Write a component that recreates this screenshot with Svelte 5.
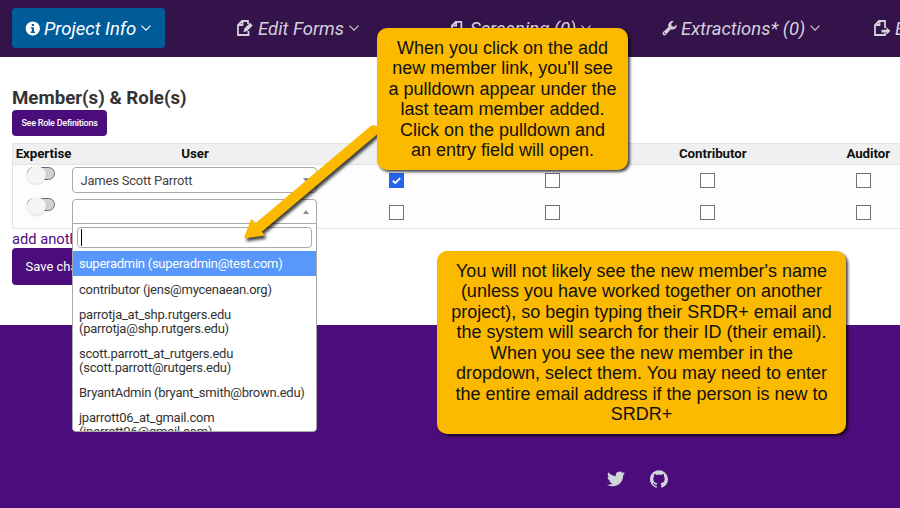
<script>
  const roles = ['Leader', 'Consolidator', 'Contributor', 'Auditor'];
  const rows = [[true, false, false, false], [false, false, false, false]];
  const options = [
    'superadmin (superadmin@test.com)',
    'contributor (jens@mycenaean.org)',
    'parrotja_at_shp.rutgers.edu (parrotja@shp.rutgers.edu)',
    'scott.parrott_at_rutgers.edu (scott.parrott@rutgers.edu)',
    'BryantAdmin (bryant_smith@brown.edu)',
    'jparrott06_at_gmail.com (jparrott06@gmail.com)'
  ];
  const nav = [
    { icon: 'info', label: 'Project Info' },
    { icon: 'edit', label: 'Edit Forms' },
    { icon: 'file', label: 'Screening (0)' },
    { icon: 'wrench', label: 'Extractions* (0)' },
    { icon: 'export', label: 'Export' }
  ];
</script>

<div class="page">
  <nav>
    {#each nav as item, i}
      <div class="cell">
        <div class="item" class:active={i === 0}>
          <svg class="icon" class:wide={i === 1 || i === 4} viewBox="0 0 16 16">
            {#if item.icon === 'info'}
              <circle cx="8.300" cy="8" r="7.600" fill="currentColor" />
              <path d="M7.200 3.200h2.300v2H7.200zM6.200 6.600h3.300v4.600h1.100v1.500H6.200v-1.500h1.100V8.100H6.200z" fill="#005b99" />
            {:else if item.icon === 'edit'}
              <path d="M11 4V1H5L1 5v10h10.5v-4M5.5 1v4H1" fill="none" stroke="currentColor" stroke-width="1.8" />
              <path d="M6.5 12l.8-3.500L13 2.800l2.700 2.600L10 11.200z" fill="currentColor" />
            {:else if item.icon === 'wrench'}
              <path d="M15.7 3.8a4.6 4.6 0 0 1-6.2 5L3.9 15A2.2 2.2 0 0 1 .8 12L7 6.4A4.6 4.6 0 0 1 12.5.3L9.8 3l.5 2.6 2.7.5zM3 12.3a.8.8 0 1 0 0 1.6.8.8 0 0 0 0-1.6z" fill="currentColor" fill-rule="evenodd" />
            {:else}
              <path d="M11 8V1H5L1 5v10h10v-2M5.5 1v4H1" fill="none" stroke="currentColor" stroke-width="1.8" />
              {#if item.icon === 'export'}
                <path d="M7.5 9.7h5V7.2l4 3.8-4 3.8v-2.4h-5z" fill="currentColor" />
              {/if}
            {/if}
          </svg>
          <span>{item.label}</span>
          <svg class="chev" viewBox="0 0 10 6"><path d="M.5.7 5 5.2 9.5.7" fill="none" stroke="currentColor" stroke-width="1.1" /></svg>
        </div>
      </div>
    {/each}
  </nav>

  <main>
    <h1>Member(s) &amp; Role(s)</h1>
    <button class="defs">See Role Definitions</button>
    <div class="table">
      <div class="row head">
        <b>Expertise</b><b>User</b>
        {#each roles as r}<b>{r}</b>{/each}
      </div>
      {#each rows as row, i}
        <div class="row body">
          <div class="switch"><i></i></div>
          <div class="select" class:open={i === 1}>
            <span>{i === 0 ? 'James Scott Parrott' : ''}</span>
            <em></em>
            {#if i === 1}
              <div class="menu">
                <div class="search"><i></i></div>
                <ul>
                  {#each options as o, n}<li class:on={n === 0}>{o}</li>{/each}
                </ul>
              </div>
            {/if}
          </div>
          {#each row as on}
            <div class="box" class:on>
              {#if on}<svg viewBox="0 0 13 13"><path d="M2.8 6.8 5.3 9 10.2 4.2" fill="none" stroke="#fff" stroke-width="1.8" /></svg>{/if}
            </div>
          {/each}
        </div>
      {/each}
    </div>
    <a class="add">add another</a>
    <button class="save">Save changes</button>
  </main>

  <footer>
    <svg viewBox="0 0 24 24"><path fill="currentColor" d="M23.95 4.57a10 10 0 0 1-2.82.77 4.96 4.96 0 0 0 2.16-2.72c-.95.55-2 .95-3.13 1.18a4.92 4.92 0 0 0-8.38 4.48C7.69 8.1 4.07 6.13 1.64 3.16a4.82 4.82 0 0 0-.67 2.48c0 1.71.87 3.21 2.19 4.1a4.9 4.9 0 0 1-2.23-.62v.06a4.92 4.92 0 0 0 3.95 4.83 5 5 0 0 1-2.21.08 4.94 4.94 0 0 0 4.6 3.42A9.87 9.87 0 0 1 0 19.54a13.99 13.99 0 0 0 7.55 2.21c9.05 0 14-7.5 14-13.98 0-.21 0-.42-.02-.63a9.94 9.94 0 0 0 2.46-2.55z" /></svg>
    <svg viewBox="0 0 24 24"><path fill="currentColor" d="M12 .3a12 12 0 0 0-3.8 23.38c.6.12.83-.26.83-.57L9 21.07c-3.34.72-4.04-1.61-4.04-1.61-.55-1.39-1.34-1.76-1.34-1.76-1.08-.74.09-.73.09-.73 1.2.09 1.83 1.24 1.83 1.24 1.08 1.83 2.81 1.3 3.5 1 .1-.78.42-1.31.76-1.61-2.67-.3-5.47-1.33-5.47-5.93 0-1.31.47-2.38 1.24-3.22-.14-.3-.54-1.52.1-3.18 0 0 1-.32 3.3 1.23a11.5 11.5 0 0 1 6 0c2.28-1.55 3.29-1.23 3.29-1.23.64 1.66.24 2.88.12 3.18a4.65 4.65 0 0 1 1.23 3.22c0 4.61-2.8 5.63-5.48 5.92.42.36.81 1.1.81 2.22l-.01 3.29c0 .31.2.69.82.57A12 12 0 0 0 12 .3" /></svg>
  </footer>

  <svg class="arrow" viewBox="0 0 900 508">
    <g fill="#fbba00" stroke="#fbba00">
      <path d="M373.500 130.500 258 228" stroke-width="10.500" stroke-linecap="round" />
      <path d="M245 237.500 251.500 220 263.500 235z" stroke-width="1.500" stroke-linejoin="round" />
    </g>
  </svg>
  <div class="note one">
    When you click on the add<br />new member link, you'll see<br />a pulldown appear under the<br />last team member added.<br />Click on the pulldown and<br />an entry field will open.
  </div>
  <div class="note two">
    You will not likely see the new member's name<br />(unless you have worked together on another<br />project), so begin typing their SRDR+ email and<br />the system will search for their ID (their email).<br />When you see the new member in the<br />dropdown, select them. You may need to enter<br />the entire email address if the person is new to<br />SRDR+
  </div>
</div>

<style>
  .page { position: relative; width: 900px; height: 508px; overflow: hidden; display: flex; flex-direction: column; background: #fff; font-family: Roboto, sans-serif; color: #333; }
  .page * { box-sizing: border-box; }
  nav { height: 57px; flex: none; background: #34124a; display: grid; grid-template-columns: 211px 214px 211px 212px 212px; padding: 8px 0 0 12px; color: #d4d0dc; }
  .cell { display: flex; }
  .item { height: 40px; padding: 0 14px; display: flex; align-items: center; border-radius: 4px; font-size: 18.500px; font-style: italic; white-space: nowrap; }
  .item span { padding-top: 2px; }
  .active { background: #005b99; color: #fff; width: 153px; padding: 0 13px; }
  .icon { width: 15px; height: 15px; margin-right: 4px; overflow: visible; }
  .wide { width: 16px; height: 16px; margin-right: 5px; }
  .chev { width: 10px; height: 6px; margin-left: 5px; }
  main { height: 268px; flex: none; padding: 31px 0 0 12px; display: flex; flex-direction: column; align-items: flex-start; }
  h1 { margin: 0; font-size: 18.700px; line-height: 21px; height: 22px; font-weight: 700; }
  button { border: 0; background: #4c0d7c; color: #fff; font-family: inherit; border-radius: 4px; padding: 0; white-space: nowrap; }
  .defs { width: 95px; height: 26px; font-size: 9px; font-weight: 500; letter-spacing: -.24px; }
  .table { margin-top: 7px; width: 932px; height: 86px; flex: none; border: 1px solid #e3e3e3; background: #fdfdfd; }
  .row { display: grid; grid-template-columns: 59px 247px repeat(4, 155.5px); }
  .head { height: 21px; background: #f0f0f0; border-bottom: 1px solid #e3e3e3; text-align: center; color: #111; font-size: 13.300px; line-height: 20px; letter-spacing: -.05px; }
  .head b:first-child { padding-left: 2px; white-space: nowrap; }
  .head b:nth-child(2) { padding-right: 1px; }
  .head b:nth-child(n+3) { padding-left: 10px; }
  .body { height: 32px; padding-top: 2px; }
  .switch { width: 28px; height: 13px; margin: 0 0 0 14px; border: 1px solid #666b78; border-radius: 7px; background: #d2d2d2; position: relative; }
  .switch i { position: absolute; left: -1px; top: -2px; width: 19px; height: 18px; border-radius: 50%; background: #f5f5f5; box-shadow: 0 1px 2px #0002; }
  .body + .body .switch { margin-top: -1px; }
  .select { position: relative; width: 245px; height: 26px; border: 1px solid #aaa; border-radius: 4px; background: #fff; display: flex; align-items: center; justify-content: space-between; padding: 0 7px 0 7.500px; font-size: 13px; letter-spacing: -.22px; color: #444; }
  .select em { border: 3px solid transparent; border-top: 4px solid #888; border-bottom: 0; }
  .open { border-radius: 4px 4px 0 0; }
  .open em { border-top: 0; border-bottom: 4px solid #888; }
  .menu { position: absolute; z-index: 2; top: 23px; left: -1px; width: 245px; height: 209px; border: 1px solid #aaa; border-radius: 0 0 4px 4px; background: #fff; overflow: hidden; padding: 3px 0 0; }
  .search { height: 21px; margin: 0 4px 3px; border: 1px solid #aaa; border-radius: 4px; padding: 1px 3px; }
  .search i { display: block; width: 1px; height: 17px; background: #000; }
  ul { margin: 0; padding: 0; list-style: none; }
  li { padding: 6px 6px 5px; font-size: 13px; line-height: 14px; letter-spacing: -.24px; color: #333; }
  li.on { background: #5897fb; color: #fff; margin-bottom: 1px; letter-spacing: -.26px; }
  .box { width: 15px; height: 15px; justify-self: center; margin-top: 6px; border: 1px solid #6b7280; background: #fff; }
  .box svg { display: block; width: 13px; height: 13px; }
  .box.on { background: #2563eb; border-color: #2563eb; }
  .add { color: #4c0d7c; font-size: 14.700px; line-height: 21px; height: 19px; }
  .save { width: 110px; height: 37px; font-size: 13px; text-align: left; padding-left: 13.500px; }
  footer { flex: 1; background: #4c0d7c; color: #d1d5db; display: flex; align-items: flex-end; padding: 0 0 20px 607px; gap: 24.500px; }
  footer svg { width: 18px; height: 18px; }
  .arrow { position: absolute; z-index: 3; inset: 0; width: 900px; height: 508px; filter: drop-shadow(2px 3px 1.500px #000b); pointer-events: none; }
  .note { position: absolute; z-index: 4; background: #fbba00; border-radius: 10px; color: #111; font: 18px/20.570px "Liberation Sans", Arial, sans-serif; text-align: center; white-space: nowrap; box-shadow: 2px 2px 3px #000b; }
  .one { left: 377px; top: 28px; width: 251px; height: 142px; padding: 9.500px 0; }
  .two { left: 437px; top: 251px; width: 409px; height: 183px; padding: 9.500px 0; }
</style>
